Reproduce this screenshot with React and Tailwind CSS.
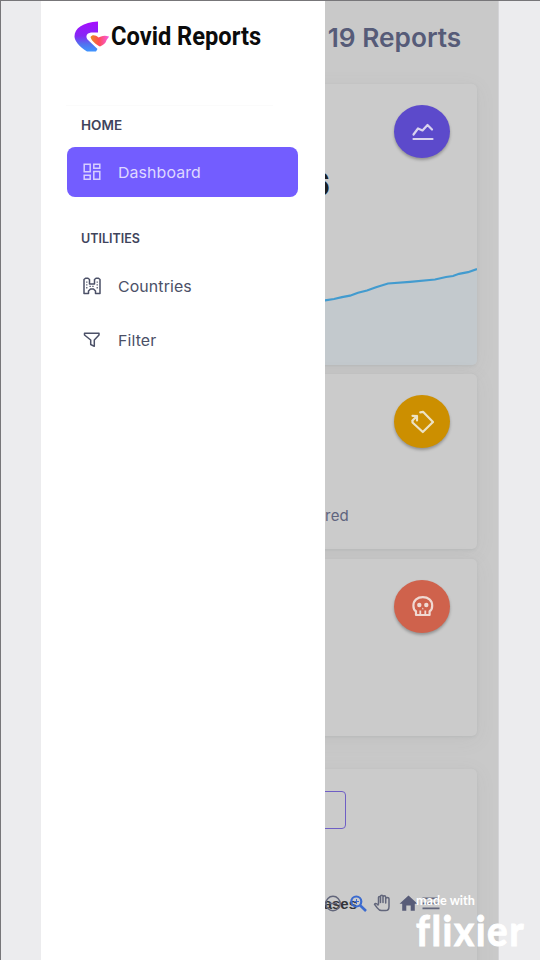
import React from 'react';

function Fab({ className, children }) {
  return (
    <div className={`flex h-[53px] w-14 shrink-0 items-center justify-center rounded-[50%] shadow-[0_2px_3px_rgba(0,0,0,0.28)] ${className}`}>
      {children}
    </div>
  );
}

function Card({ className, children }) {
  return (
    <section className={`relative flex shrink-0 flex-col overflow-hidden rounded-[5px] bg-[#cbcbcb] shadow-[0_1px_3px_rgba(110,125,125,0.14),0_4px_20px_rgba(110,120,120,0.08)] ${className}`}>
      {children}
    </section>
  );
}

function TrendIcon() {
  return (
    <svg width="24" height="20" viewBox="0 0 24 20" fill="none" stroke="#d9d3ee" strokeWidth="2.2" strokeLinecap="round" strokeLinejoin="round">
      <path d="M3.500 12.500 8 6.500 12.500 8.500 17.500 3 22 7.500M3.500 17H22.500" />
    </svg>
  );
}

function RotateIcon() {
  return (
    <svg width="24" height="24" viewBox="0 0 24 24" fill="none" stroke="#ece2c4" strokeWidth="2.2" strokeLinecap="round" strokeLinejoin="round">
      <path d="M10.300 2.300 13 1.800 23 12 12.800 22 2.500 12.500V11" />
      <path d="M2.500 5.800 7 6 7 10.500M7 6 2.500 10.500" />
    </svg>
  );
}

function SkullIcon() {
  return (
    <svg width="24" height="24" viewBox="0 0 24 24" fill="none" stroke="#f0d9d2" strokeWidth="2.200" strokeLinejoin="round">
      <path d="M6 20V16.300C3.900 15 3.400 13 3.400 10.700 3.400 5.300 7.500 2.200 12.800 2.200S22.200 5.300 22.200 10.700C22.200 13 21.700 15 19.600 16.300V20Z" />
      <circle cx="9.300" cy="10" r="2.200" fill="#f0d9d2" stroke="none" />
      <circle cx="16.300" cy="10" r="2.200" fill="#f0d9d2" stroke="none" />
      <path d="M10.300 15.500V20M15.300 15.500V20" strokeWidth="1.800" />
      <path d="M11.800 14.300 12.800 12.500 13.800 14.300Z" fill="#f0d9d2" stroke="none" />
    </svg>
  );
}

function Sparkline() {
  return (
    <svg className="mt-auto block" width="416" height="100" viewBox="61 265 416 100">
      <path d="M61 345 200 330 325 300.3 334 299 342 297.2 350 295.7 358 292.7 367 290.5 376 287.2 388 283.5 410 281.8 435 279.5 446 277 453 276 459 273.8 468 272.2 477 269V365H61Z" fill="#c3c9cd" />
      <path d="M61 345 200 330 325 300.3 334 299 342 297.2 350 295.7 358 292.7 367 290.5 376 287.2 388 283.5 410 281.8 435 279.5 446 277 453 276 459 273.8 468 272.2 477 269" fill="none" stroke="#429bcf" strokeWidth="2.2" />
    </svg>
  );
}

function Toolbar() {
  return (
    <div className="relative flex h-6 w-full items-center">
      <span className="ml-[260px] w-[36px] whitespace-nowrap text-right font-['Liberation_Sans',sans-serif] text-[15px] font-bold text-[#333539]">ases</span>
      <svg className="absolute left-[262px] top-0" width="120" height="24" viewBox="323 892 120 24" fill="none">
        <circle cx="333" cy="903.5" r="7.2" stroke="#62667b" strokeWidth="1.5" />
        <path d="M329 903.5H337" stroke="#62667b" strokeWidth="1.5" />
        <circle cx="356.3" cy="901.500" r="5" stroke="#3c6bcf" strokeWidth="2.200" />
        <path d="M360 905.300 366 911" stroke="#3c6bcf" strokeWidth="2.600" />
        <path d="M354 901.500H359M356.500 899V904" stroke="#3c6bcf" strokeWidth="1" />
        <path d="M378.500 904.500V897.500C378.500 896 380.500 896 380.500 897.500V902.500 896.500C380.500 894.800 383 894.800 383 896.500V902.500 897C383 895.400 385.700 895.400 385.700 897V903 898.700C385.700 897.200 389 897.200 389 898.700V906.500C389 909 387.800 910.600 385.500 910.600H381.500C379.500 910.600 378.300 909.400 377.200 907.900L374.500 904.300C375.300 902.900 377 903.500 378.500 905.500" stroke="#62667b" strokeWidth="1.500" strokeLinejoin="round" />
        <path d="M408.500 895.500 417.500 903.800H414.800V910.800H410.700V905.500H406.300V910.800H402.200V903.800H399.500Z" fill="#585c78" />
        <path d="M422.500 898.300H439.500M422.500 903.300H439.500M422.500 908.300H439.500" stroke="#62667b" strokeWidth="1.800" />
      </svg>
    </div>
  );
}

function Logo() {
  return (
    <svg className="shrink-0" width="36" height="32" viewBox="0 0 36 32">
      <defs>
        <linearGradient id="crescent" x1="0" y1="0" x2="0" y2="1">
          <stop offset="0" stopColor="#a70cff" />
          <stop offset="0.48" stopColor="#8528f5" />
          <stop offset="0.75" stopColor="#5271ee" />
          <stop offset="1" stopColor="#3f95ff" />
        </linearGradient>
        <linearGradient id="heart" x1="0" y1="0" x2="1" y2="0">
          <stop offset="0" stopColor="#e98c1d" />
          <stop offset="0.45" stopColor="#ff4b55" />
          <stop offset="1" stopColor="#f65de8" />
        </linearGradient>
      </defs>
      <path d="M24 0.500C9 1.500 0.500 7 0.500 15.500 0.500 19.500 4.500 25 13 30.500H22L23.500 28 13.500 18.500C12 16.500 12 14 14 12.500L17 11.500H24Z" fill="url(#crescent)" />
      <path d="M16.500 16C18 13.600 21.500 13.800 24.500 16.500L27 15.500C29.500 14.500 32 14.500 35 15.500 34.500 17.500 32.500 18 32 20.500 31.500 22.500 29.500 23.500 26 25.500 22 23.500 17.500 20 16.500 16Z" fill="url(#heart)" />
    </svg>
  );
}

function DashboardIcon() {
  return (
    <svg width="18" height="18" viewBox="0 0 18 18" fill="none" stroke="#d7cfff" strokeWidth="1.5">
      <path d="M1.200 1.200H7.200V8.800H1.200ZM10.800 1.200H16.800V5.200H10.800ZM1.200 12.300H7.200V16.200H1.200ZM10.800 8.500H16.800V16.200H10.800Z" />
    </svg>
  );
}

function CastleIcon() {
  return (
    <svg width="18" height="18" viewBox="0 0 18 18" fill="none" stroke="#4b5067" strokeWidth="1.500" strokeLinejoin="round">
      <path d="M1 16.500V2.500L2.500 1.200H5L6.500 2.500V7H11.500V2.500L13 1.200H15.500L17 2.500V16.500H12.500V14L10.500 12H7.500L5.500 14V16.500Z" />
      <path d="M3.800 4.500V12M14.200 4.500V12M6.500 9.300H12" strokeWidth="1.200" strokeDasharray="1.300 1.500" />
    </svg>
  );
}

function FilterIcon() {
  return (
    <svg width="18" height="18" viewBox="0 0 18 18" fill="none" stroke="#4b5067" strokeWidth="1.500" strokeLinejoin="round">
      <path d="M1.500 2.300H16V4L11.300 9V15.300L7.700 13.500V9L1.500 4Z" />
    </svg>
  );
}

function NavItem({ icon, label, active }) {
  return (
    <a className={`flex h-[50px] items-center rounded-lg pl-4 ${active ? 'bg-[#735dff] text-[#ded8ff]' : 'text-[#4b5067]'}`}>
      {icon}
      <span className="ml-[17px] origin-left scale-x-[1.06] whitespace-nowrap pt-0.5 text-[15px] tracking-[0.1px]">{label}</span>
    </a>
  );
}

function Drawer() {
  return (
    <aside className="absolute left-[41px] top-0 flex h-[960px] w-[284px] flex-col bg-white">
      <div className="flex h-[73px] items-center pl-[33px]">
        <Logo />
        <h1 className="ml-[1px] origin-left scale-x-[0.928] whitespace-nowrap pt-px font-['Roboto',sans-serif] text-[25.5px] font-bold leading-none text-[#0b0b0b]">Covid Reports</h1>
      </div>
      <hr className="ml-[25px] mr-[52px] mt-8 border-[#fbfbfb]" />
      <nav className="flex flex-col pl-[26px] pr-[27px]">
        <h2 className="ml-[14px] mt-[10px] h-5 origin-left scale-x-[1.08] self-start whitespace-nowrap text-[12.5px] font-semibold leading-5 text-[#3f445c]">HOME</h2>
        <div className="mt-[11px]">
          <NavItem icon={<DashboardIcon />} label="Dashboard" active />
        </div>
        <h2 className="ml-[14px] mt-8 h-5 self-start whitespace-nowrap text-[12.5px] font-semibold leading-5 text-[#3f445c]">UTILITIES</h2>
        <div className="mt-3 flex flex-col gap-1">
          <NavItem icon={<CastleIcon />} label="Countries" />
          <NavItem icon={<FilterIcon />} label="Filter" />
        </div>
      </nav>
    </aside>
  );
}

export default function App() {
  return (
    <div className="relative h-[960px] w-[540px] overflow-hidden border-l border-t border-[#777679] bg-[#ececee] font-['Inter',sans-serif]">
      <div className="-mt-px ml-10 flex h-[960px] w-[458px] flex-col border-r border-[#d4d4d7] bg-[#c9c9c9] pl-5 pr-[21px]">
        <header className="flex h-[84px] shrink-0 items-start justify-end pr-4 pt-[22px]">
          <span className="origin-right scale-x-[1.01] whitespace-nowrap text-[26px] font-semibold leading-8 text-[#565b78]">19 Reports</span>
        </header>
        <Card className="h-[281px]">
          <div className="flex justify-end pr-[27px] pt-[21px]">
            <Fab className="bg-[#5c4acb]"><TrendIcon /></Fab>
          </div>
          <div className="mt-[10px] flex h-[34px] items-center justify-end pr-[147px] text-[32px] font-bold leading-none text-[#1d1f21]">6</div>
          <Sparkline />
        </Card>
        <Card className="mt-[9px] h-[175px]">
          <div className="flex justify-end pr-[27px] pt-[21px]">
            <Fab className="bg-[#cc8f00]"><RotateIcon /></Fab>
          </div>
          <p className="mt-[56px] whitespace-nowrap pr-[128px] text-right text-[15px] leading-6 tracking-[0.2px] text-[#5f647e]">Recovered</p>
        </Card>
        <Card className="mt-[10px] h-[177px]">
          <div className="flex justify-end pr-[27px] pt-[21px]">
            <Fab className="bg-[#cf624c]"><SkullIcon /></Fab>
          </div>
        </Card>
        <Card className="mt-[33px] h-[210px]">
          <div className="mt-[22px] flex justify-end pr-[131px]">
            <div className="h-[38px] w-[120px] rounded border-[1.5px] border-[#6f5fc5]" />
          </div>
          <div className="mt-[63px]">
            <Toolbar />
          </div>
        </Card>
      </div>
      <div className="absolute -left-px -top-px h-[960px]">
        <Drawer />
      </div>
      <div className="absolute left-[415px] top-[892px] flex flex-col whitespace-nowrap font-['Lato',sans-serif] text-white">
        <span className="h-4 origin-left scale-x-[0.9] text-[14px] font-bold leading-[14px]">made with</span>
        <span className="h-12 origin-left scale-x-[0.92] text-[42px] font-bold leading-[43px] tracking-[1.7px] [-webkit-text-stroke:1px_white] [font-variant-ligatures:none]">flixier</span>
      </div>
    </div>
  );
}
